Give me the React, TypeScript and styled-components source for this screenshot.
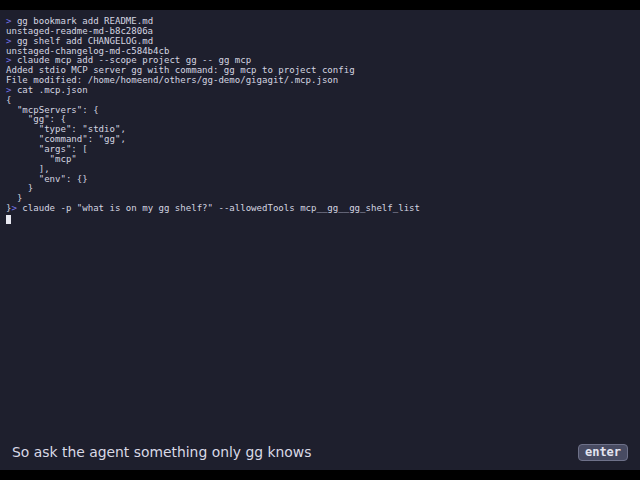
import React from "react";
import styled, { createGlobalStyle } from "styled-components";

const Global = createGlobalStyle`
  html, body { margin: 0; padding: 0; background: #000; }
  #root { height: 100vh; }
`;

const Screen = styled.div`
  height: 480px;
  width: 640px;
  display: flex;
  flex-direction: column;
  background: #000;
`;

const Bar = styled.div`
  height: 10px;
  flex: none;
  background: #000;
`;

const Panel = styled.div`
  flex: 1;
  display: flex;
  flex-direction: column;
  background: #1e1f2d;
`;

const Terminal = styled.div`
  flex: 1;
  padding: 7px 6px 0;
  font-family: "DejaVu Sans Mono", "Liberation Mono", monospace;
  font-size: 9.05px;
  line-height: 9.85px;
  color: #d4d5e0;
  white-space: pre;
`;

const Line = styled.div`
  height: 9.85px;
`;

const Prompt = styled.span`
  color: #7474e8;
`;

const Cursor = styled.span`
  display: inline-block;
  width: 5px;
  height: 9px;
  background: #e8e8f0;
  vertical-align: top;
  margin-top: 1px;
`;

const Caption = styled.div`
  height: 36px;
  flex: none;
  display: flex;
  align-items: center;
  justify-content: space-between;
  padding: 0 12px;
`;

const CaptionText = styled.span`
  font-family: "DejaVu Sans", "Noto Sans", sans-serif;
  font-size: 13.9px;
  color: #d9d9e6;
`;

const Key = styled.span`
  box-sizing: border-box;
  width: 50px;
  height: 17px;
  display: flex;
  align-items: center;
  justify-content: center;
  background: #484b62;
  border: 1px solid #6e7189;
  border-radius: 4px;
  font-family: "DejaVu Sans Mono", monospace;
  font-size: 12px;
  font-weight: bold;
  color: #e4e4f0;
`;

const lines: Array<[boolean, string]> = [
  [true, "gg bookmark add README.md"],
  [false, "unstaged-readme-md-b8c2806a"],
  [true, "gg shelf add CHANGELOG.md"],
  [false, "unstaged-changelog-md-c584b4cb"],
  [true, "claude mcp add --scope project gg -- gg mcp"],
  [false, "Added stdio MCP server gg with command: gg mcp to project config"],
  [false, "File modified: /home/homeend/others/gg-demo/gigagit/.mcp.json"],
  [true, "cat .mcp.json"],
  [false, "{"],
  [false, '  "mcpServers": {'],
  [false, '    "gg": {'],
  [false, '      "type": "stdio",'],
  [false, '      "command": "gg",'],
  [false, '      "args": ['],
  [false, '        "mcp"'],
  [false, "      ],"],
  [false, '      "env": {}'],
  [false, "    }"],
  [false, "  }"],
];

export default function App() {
  return (
    <>
      <Global />
      <Screen>
        <Bar />
        <Panel>
          <Terminal>
            {lines.map(([p, t], i) => (
              <Line key={i}>
                {p ? <Prompt>{"> "}</Prompt> : null}
                {t}
              </Line>
            ))}
            <Line>
              {"}"}
              <Prompt>{"> "}</Prompt>
              {'claude -p "what is on my gg shelf?" --allowedTools mcp__gg__gg_shelf_list'}
            </Line>
            <Line>
              <Cursor />
            </Line>
          </Terminal>
          <Caption>
            <CaptionText>So ask the agent something only gg knows</CaptionText>
            <Key>enter</Key>
          </Caption>
        </Panel>
        <Bar />
      </Screen>
    </>
  );
}
